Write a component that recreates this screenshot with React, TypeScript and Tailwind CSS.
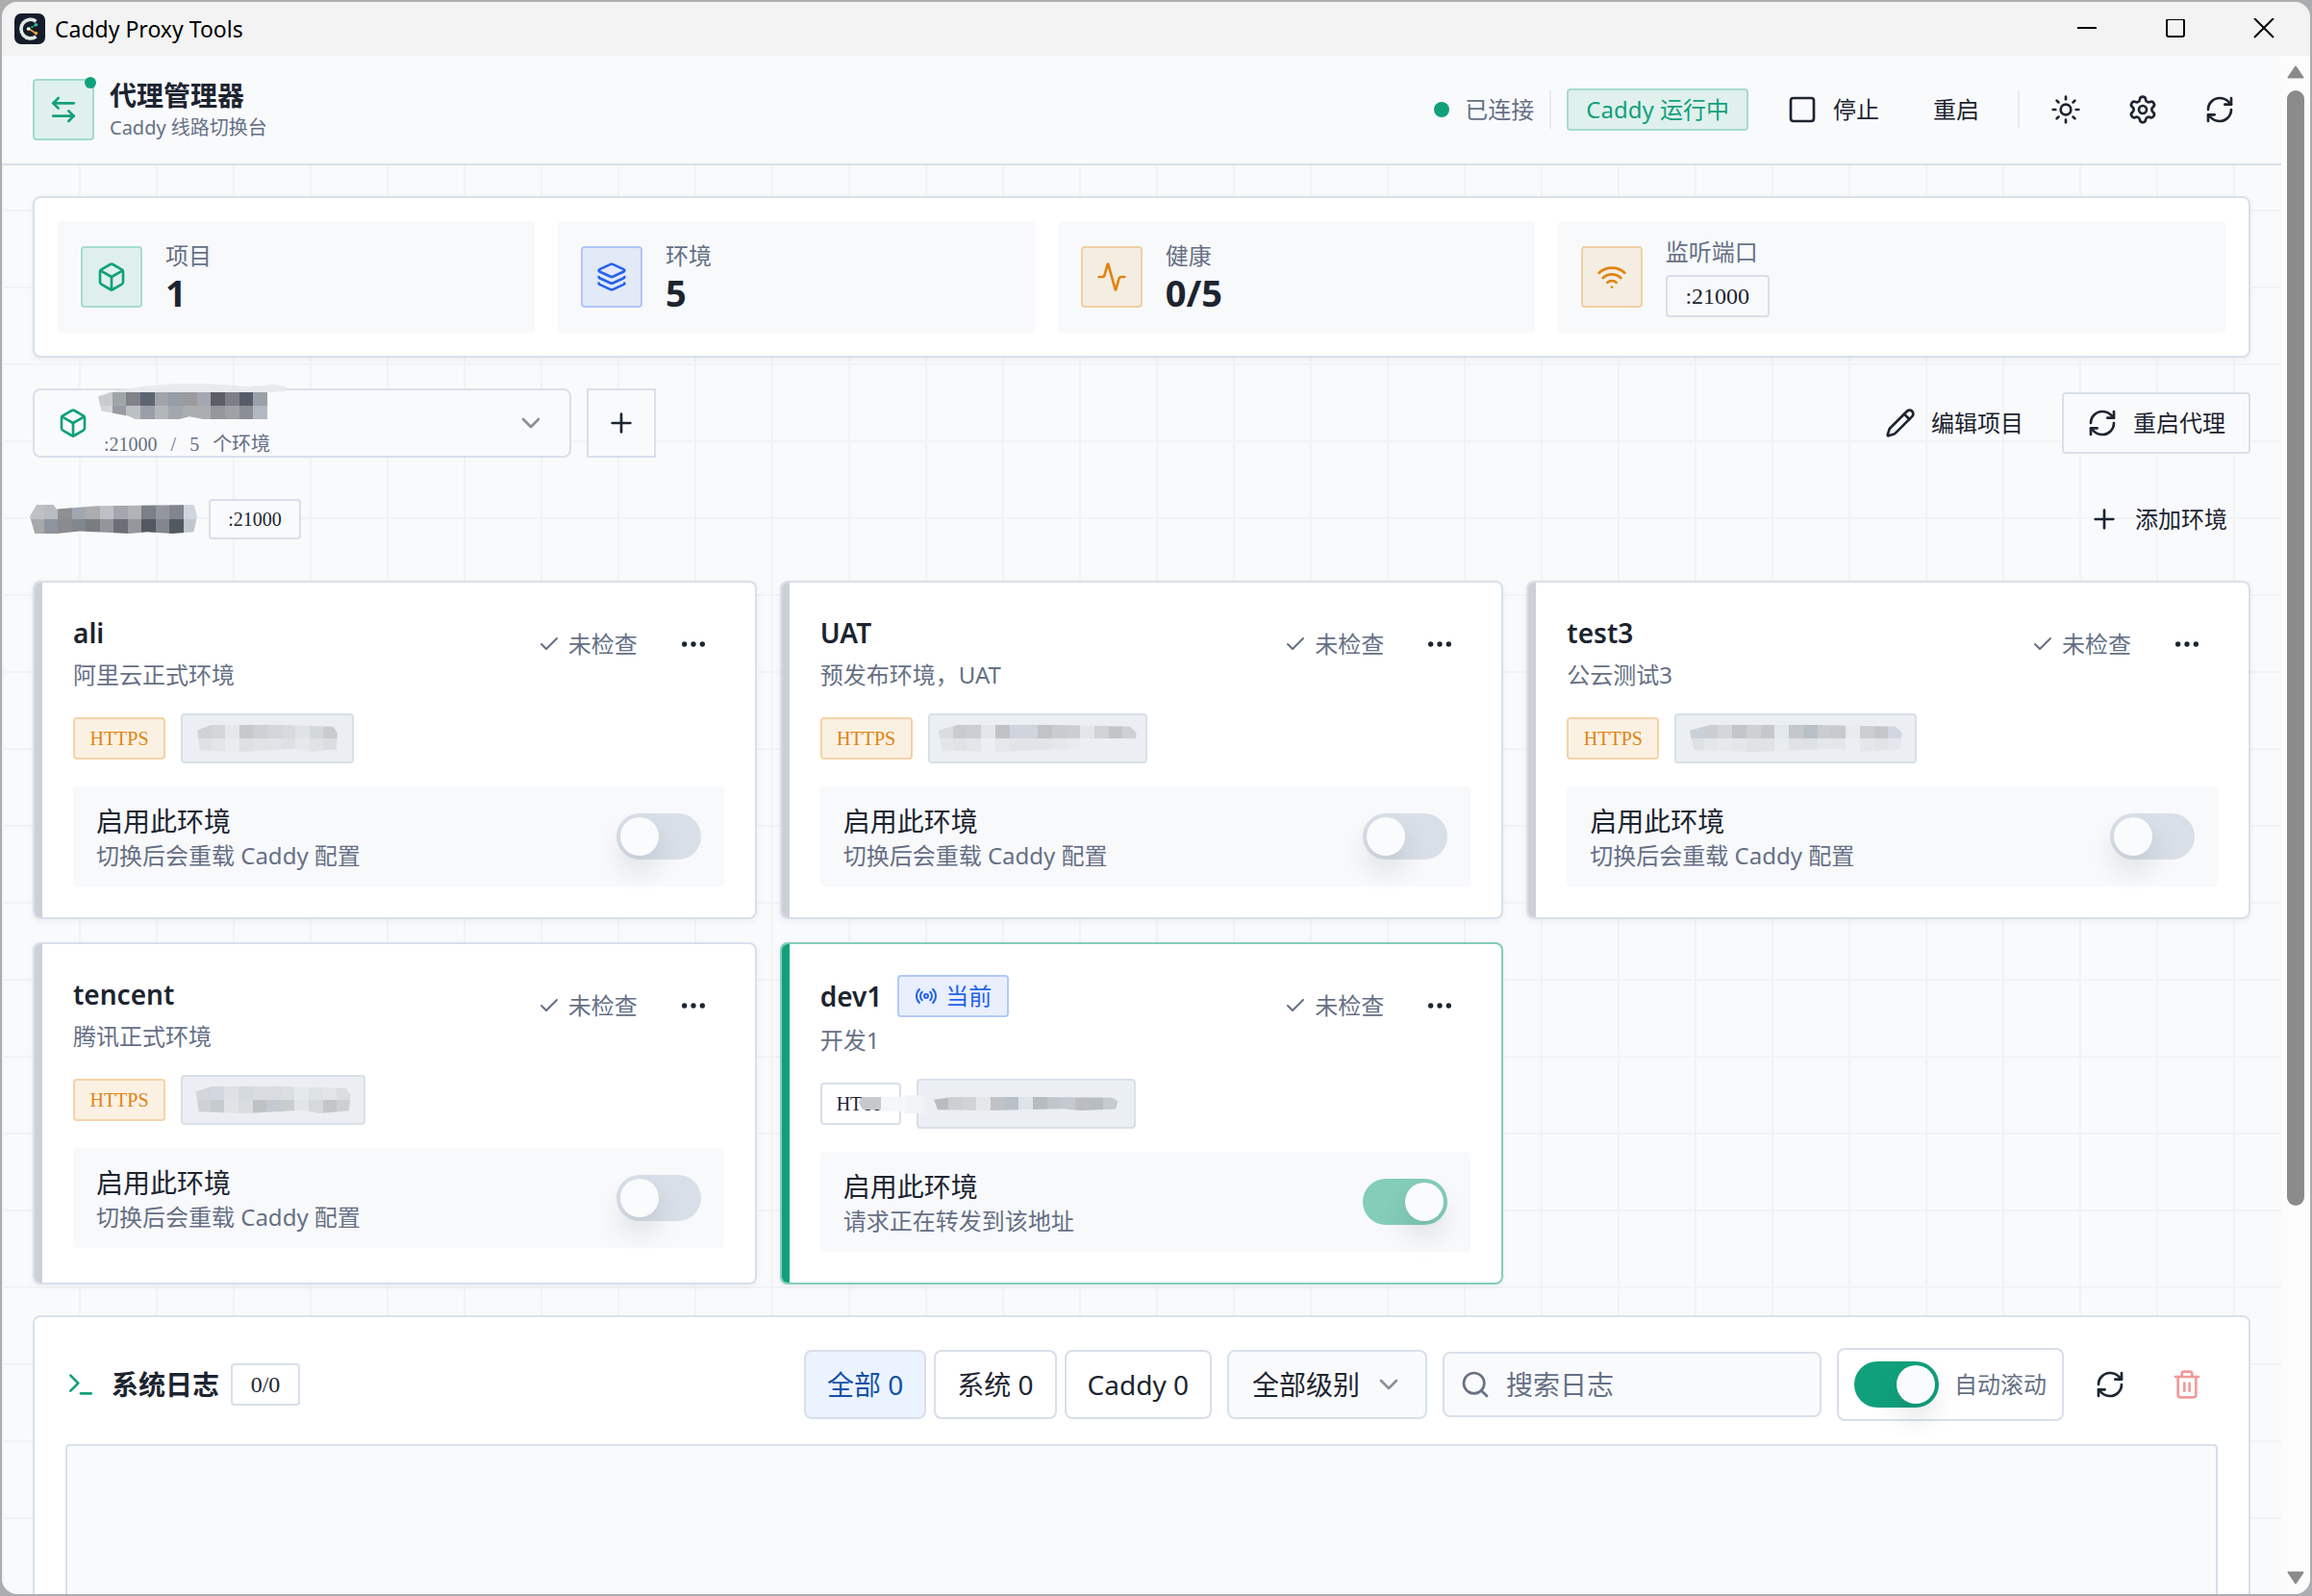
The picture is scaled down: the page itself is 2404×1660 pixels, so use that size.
import { useState } from "react";
import type { ReactNode } from "react";
import {
  Activity,
  ArrowLeftRight,
  Box,
  Check,
  ChevronDown,
  Ellipsis,
  Layers,
  Pencil,
  Plus,
  Radio,
  RefreshCw,
  Search,
  Settings,
  Square,
  Sun,
  Terminal,
  Trash2,
  Wifi,
} from "lucide-react";

type Env = {
  name: string;
  desc: string;
  proto: "HTTPS" | "HTTP";
  urlWidth: number;
  cells: string[][];
  active?: boolean;
};

const ENVS: Env[] = [
  {
    name: "ali",
    desc: "阿里云正式环境",
    proto: "HTTPS",
    urlWidth: 180,
    cells: [
      ["#cfd3d6", "#d3d7da", "#e4e8ea", "#c6c9cc", "#cdd1d4", "#d2d5d9", "#d6dade", "#dfe3e6", "#d3d8da", "#c8cccf"],
      ["#dde1e3", "#e2e6e8", "#e8ecef", "#dde0e3", "#dfe3e5", "#e1e4e7", "#dde1e4", "#e5e9eb", "#dfe3e6", "#dadee1"],
    ],
  },
  {
    name: "UAT",
    desc: "预发布环境，UAT",
    proto: "HTTPS",
    urlWidth: 228,
    cells: [
      ["#d9dde0", "#c9cccf", "#cbced3", "#e3e7ea", "#c0c3c6", "#d0d4de", "#d0d4dc", "#c0c4c7", "#c9cccf", "#cacdd2", "#e3e7ea", "#cfd3d6", "#c2c5c8", "#cdd1d6"],
      ["#e2e6e9", "#dfe3e6", "#e2e6e9", "#ebeff3", "#e4e8eb", "#e0e4e8", "#e0e4e8", "#e1e5e8", "#e4e8eb", "#e7ebee", "#ebeff3", "#ebeff3", "#ebeff3", "#ebeff3"],
    ],
  },
  {
    name: "test3",
    desc: "公云测试3",
    proto: "HTTPS",
    urlWidth: 252,
    cells: [
      ["#c9d0d8", "#cacdd2", "#d3d7da", "#c2c5c9", "#cdd1d4", "#c4c8cc", "#e3e8ec", "#c4c8cc", "#b9c0c8", "#c9cdd1", "#c6cacd", "#e8ebee", "#cbcfd2", "#c3c7ca", "#d2d6e0"],
      ["#dde1e4", "#e3e7ea", "#e6eaed", "#e3e7ea", "#dfe3e6", "#dfe3e6", "#e8ecef", "#dfe3e6", "#dde1e5", "#e3e7ea", "#e3e7ea", "#ebeff3", "#e3e7ea", "#e0e4e7", "#e3e6ec"],
    ],
  },
  {
    name: "tencent",
    desc: "腾讯正式环境",
    proto: "HTTPS",
    urlWidth: 192,
    cells: [
      ["#d3d5da", "#d3d7df", "#dde1e5", "#d5d9e0", "#d9dde0", "#d8dce0", "#dbdfe2", "#e4e9ec", "#dde2e4", "#e1e5e7", "#dadee1"],
      ["#cfd1d4", "#c6cbcf", "#dfe3e5", "#d9dde0", "#bfc2c5", "#c5c9d2", "#cacdd0", "#e1e5e8", "#d5d9db", "#c2c6c9", "#ccd0d3"],
    ],
  },
  {
    name: "dev1",
    desc: "开发1",
    proto: "HTTP",
    urlWidth: 228,
    active: true,
    cells: [
      ["#b9bcbf", "#cdd0d3", "#d0d4d6", "#e3e7ea", "#c0c2c5", "#b9c1c8", "#dfe4e8", "#b9bcbf", "#bfc6cc", "#c3c9ce", "#babec1", "#b8bdc4", "#c6cbd0"],
    ],
  },
];

const PROJECT_MASK = [
  ["#c9cbcd", "#a0a5a8", "#808287", "#5e6572", "#a1a5a9", "#959da6", "#9b9b9e", "#a3a7b0", "#5b5e66", "#7c7f87", "#565c69", "#9aa1a8"],
  ["#d5d6d7", "#989ba3", "#bcc0c4", "#9a9ea8", "#b3b7b9", "#a2a6ae", "#abaeaf", "#abaeb0", "#94969c", "#9fa1a6", "#8b8e95", "#b2b8c1"],
];

const TITLE_MASK = [
  ["#bec1c4", "#b8bbc0", "#8f8f92", "#a0a7b1", "#adadb0", "#bdc0c6", "#a3a6ac", "#b1b4b6", "#7b7f87", "#9597a0", "#81858d", "#cfd5de"],
  ["#a6a8aa", "#8e949f", "#8a8a8f", "#81878f", "#7a7d80", "#92959c", "#6d6f76", "#95979c", "#535963", "#83868f", "#535961", "#c0c7cf"],
];

// Pixelated strip that hides a private value.
function Mask({ rows, width, rowHeight, className }: { rows: string[][]; width: number; rowHeight: number; className?: string }) {
  return (
    <svg
      width={width}
      height={rows.length * rowHeight}
      viewBox={`0 0 ${rows[0].length} ${rows.length}`}
      preserveAspectRatio="none"
      shapeRendering="crispEdges"
      className={className}
      aria-hidden="true"
    >
      {rows.map((row, y) => row.map((fill, x) => <rect key={`${x}-${y}`} x={x} y={y} width="1" height="1" fill={fill} />))}
    </svg>
  );
}

function Chip({ children, className = "" }: { children: ReactNode; className?: string }) {
  return (
    <span className={`inline-flex items-center justify-center rounded border-2 font-['Liberation_Serif','Noto_Sans_CJK_SC',serif] ${className}`}>
      {children}
    </span>
  );
}

function Toggle({ checked, onChange, label, tone }: { checked: boolean; onChange: () => void; label: string; tone: string }) {
  return (
    <input
      type="checkbox"
      role="switch"
      aria-label={label}
      checked={checked}
      onChange={onChange}
      className={`h-12 w-[88px] shrink-0 appearance-none rounded-full bg-[#d8dfe8] p-1 before:block before:size-10 before:rounded-full before:bg-[#fafbfc] before:shadow-[0_16px_28px_rgba(28,36,48,0.12)] before:content-[''] checked:before:translate-x-10 ${tone}`}
    />
  );
}

function IconButton({ label, children, className = "" }: { label: string; children: ReactNode; className?: string }) {
  return (
    <button type="button" aria-label={label} className={`flex size-16 shrink-0 items-center justify-center rounded ${className}`}>
      {children}
    </button>
  );
}

function Stat({ icon, tone, label, children }: { icon: ReactNode; tone: string; label: string; children: ReactNode }) {
  return (
    <div className="flex items-center gap-6 rounded bg-[#f8f9fb] px-6 py-4">
      <div className={`flex size-16 shrink-0 items-center justify-center rounded border-2 ${tone}`}>{icon}</div>
      <div className="flex flex-col items-start">
        <span className="text-2xl leading-8 text-[#667085]">{label}</span>
        {children}
      </div>
    </div>
  );
}

function AppIcon() {
  return (
    <svg width="32" height="32" viewBox="0 0 32 32" aria-hidden="true">
      <rect width="32" height="32" rx="7" fill="#141d29" />
      <path d="M22.500 8.200A9.800 9.800 0 1 0 22.500 24" fill="none" stroke="#dfe9e6" strokeWidth="3.600" />
      <path d="M15 16l7-4" stroke="#2cc7a5" strokeWidth="1.500" strokeDasharray="2 1" />
      <path d="M15 16l7 4.500" stroke="#f0a63a" strokeWidth="1.500" />
      <circle cx="14.500" cy="16" r="1.800" fill="#fff" />
      <circle cx="22.500" cy="11.800" r="1.700" fill="#2cc7a5" />
      <circle cx="22.500" cy="20.500" r="1.700" fill="#f0a63a" />
    </svg>
  );
}

function TitleBar() {
  return (
    <div className="flex h-14 shrink-0 items-center bg-[#f3f3f3] pr-0.5 pl-[13px]">
      <AppIcon />
      <span className="ml-2.5 text-[23px] leading-8 text-black">Caddy Proxy Tools</span>
      <div className="ml-auto flex">
        <button type="button" aria-label="最小化" className="flex h-14 w-[92px] items-center justify-center">
          <svg width="20" height="20" viewBox="0 0 20 20"><path d="M0 9h20" stroke="#000" strokeWidth="2" /></svg>
        </button>
        <button type="button" aria-label="最大化" className="flex h-14 w-[92px] items-center justify-center">
          <svg width="20" height="20" viewBox="0 0 20 20"><rect x="1" y="0" width="18" height="18" rx="2" fill="none" stroke="#000" strokeWidth="2" /></svg>
        </button>
        <button type="button" aria-label="关闭" className="flex h-14 w-[92px] items-center justify-center">
          <svg width="22" height="22" viewBox="0 0 22 22"><path d="M1 0l20 20M21 0L1 20" stroke="#000" strokeWidth="2" /></svg>
        </button>
      </div>
    </div>
  );
}

function Header() {
  return (
    <header className="flex h-[114px] shrink-0 items-center gap-4 border-b-2 border-[#d8e0e8] bg-[#f9fafc] px-8">
      <div className="relative flex size-16 items-center justify-center rounded border-2 border-[#9fdccb] bg-[#e0f1ed] text-[#11a07c]">
        <ArrowLeftRight size={32} />
        <span className="absolute -top-1 -right-1 size-3 rounded-full bg-[#11a07c]" />
      </div>
      <div>
        <h1 className="text-[28px] leading-9 font-bold">代理管理器</h1>
        <p className="mt-0.5 text-xl leading-7 text-[#667085]">Caddy 线路切换台</p>
      </div>
      <div className="ml-auto flex items-center gap-4 text-2xl leading-8">
        <span className="size-4 rounded-full bg-[#11a07c]" />
        <span className="text-[#667085]">已连接</span>
        <span className="h-10 w-0.5 bg-[#e8ebef]" />
        <span className="flex h-11 items-center rounded border-2 border-[#a6dccd] bg-[#e0f1ed] px-[18px] text-[#11a07c]">Caddy 运行中</span>
        <button type="button" className="flex h-16 items-center gap-4 px-6">
          <Square size={32} />
          停止
        </button>
        <button type="button" className="-ml-2 flex h-16 items-center px-6">重启</button>
        <span className="h-10 w-0.5 bg-[#e8ebef]" />
        <IconButton label="主题"><Sun size={32} /></IconButton>
        <IconButton label="设置"><Settings size={32} /></IconButton>
        <IconButton label="刷新"><RefreshCw size={32} /></IconButton>
      </div>
    </header>
  );
}

function Stats() {
  return (
    <section className="grid grid-cols-[1fr_1fr_1fr_1.4fr] gap-6 rounded-lg border-2 border-[#d8e0e9] bg-white p-6 shadow-[0_2px_6px_rgba(28,36,48,0.06)]">
      <Stat icon={<Box size={32} />} tone="border-[#a7dccf] bg-[#dff0ec] text-[#11a07c]" label="项目">
        <strong className="text-[38px] leading-11">1</strong>
      </Stat>
      <Stat icon={<Layers size={32} />} tone="border-[#b0c6f8] bg-[#e2e9f7] text-[#2563eb]" label="环境">
        <strong className="text-[38px] leading-11">5</strong>
      </Stat>
      <Stat icon={<Activity size={32} />} tone="border-[#f0d0a4] bg-[#f4ede1] text-[#e08412]" label="健康">
        <strong className="text-[38px] leading-11">0/5</strong>
      </Stat>
      <Stat icon={<Wifi size={32} />} tone="border-[#f0d0a4] bg-[#f4ede1] text-[#e08412]" label="监听端口">
        <Chip className="mt-2 h-11 w-[108px] border-[#d8dfe9] text-2xl">:21000</Chip>
      </Stat>
    </section>
  );
}

function ProjectBar() {
  return (
    <div className="flex items-center gap-4">
      <label className="relative flex h-[72px] w-[560px] items-center rounded-lg border-2 border-[#d8e0e9] bg-[#f9fafc] px-6">
        <Box size={32} className="text-[#11a07c]" />
        <svg width="192" height="16" viewBox="0 0 192 16" className="absolute -top-2 left-[70px]" aria-hidden="true">
          <path d="M6 10 42 4 75 1 110 1 150 4 180 2 192 4 190 9 150 11V16H6z" fill="#e8ebed" />
        </svg>
        <span className="relative ml-4 flex flex-col self-start pt-0.5">
          <Mask
            rows={PROJECT_MASK}
            width={176}
            rowHeight={14}
            className="-ml-1.5 [clip-path:polygon(0_15%,8%_0,100%_0,100%_100%,62%_100%,54%_90%,48%_100%,22%_100%,18%_88%,2%_70%)]"
          />
          <span className="mt-3.5 flex gap-3.5 font-['Liberation_Serif','Noto_Sans_CJK_SC',serif] text-xl leading-6 text-[#667085]">
            <span>:21000</span>
            <span>/</span>
            <span>5</span>
            <span>个环境</span>
          </span>
        </span>
        <ChevronDown size={32} className="ml-auto text-[#8a8f98]" />
        <select aria-label="项目" className="absolute inset-0 opacity-0">
          <option>:21000</option>
        </select>
      </label>
      <button type="button" aria-label="新建项目" className="flex size-[72px] items-center justify-center border-2 border-[#d8e0e9] bg-[#f9fafc]">
        <Plus size={32} />
      </button>
      <div className="ml-auto flex items-center gap-4 text-2xl leading-8">
        <button type="button" className="flex h-16 items-center gap-4 px-6">
          <Pencil size={32} />
          编辑项目
        </button>
        <button type="button" className="flex h-16 items-center gap-4 rounded border-2 border-[#d8e0e9] bg-[#f9fafc] px-6">
          <RefreshCw size={32} />
          重启代理
        </button>
      </div>
    </div>
  );
}

function EnvCard({ env, enabled, onToggle }: { env: Env; enabled: boolean; onToggle: () => void }) {
  return (
    <article className={`flex overflow-hidden rounded-lg border-2 bg-white shadow-[0_2px_6px_rgba(28,36,48,0.06)] ${env.active ? "border-[#84cdb9]" : "border-[#d8e0e9]"}`}>
      <div className={`w-2 shrink-0 ${env.active ? "bg-[#11a07c]" : "bg-[#cdd0d9]"}`} />
      <div className="flex min-w-0 grow flex-col gap-6 p-8">
        <div className="flex items-start">
          <div className="flex flex-col gap-2">
            <div className="flex min-h-10 items-center gap-4">
              <h3 className="text-[28px] leading-10 font-semibold">{env.name}</h3>
              {env.active && (
                <span className="flex h-11 items-center gap-2 rounded border-2 border-[#b3caf9] bg-[#e9effd] px-4 text-2xl text-[#2563eb]">
                  <Radio size={24} />
                  当前
                </span>
              )}
            </div>
            <p className="text-2xl leading-8 text-[#667085]">{env.desc}</p>
          </div>
          <div className="ml-auto flex items-center gap-[26px]">
            <span className="flex items-center gap-2 text-2xl leading-8 text-[#667085]">
              <Check size={24} />
              未检查
            </span>
            <IconButton label={`${env.name} 更多操作`}><Ellipsis size={32} /></IconButton>
          </div>
        </div>
        <div className="flex h-[52px] items-center gap-4">
          {env.proto === "HTTPS" ? (
            <Chip className="h-11 w-24 border-[#f4d3a8] bg-[#fbf1e3] text-xl text-[#e08412]">HTTPS</Chip>
          ) : (
            <span className="relative flex">
              <Chip className="h-11 w-[84px] border-[#d8dfe9] bg-white text-xl">HTTP</Chip>
              <svg width="68" height="28" viewBox="0 0 68 28" className="absolute top-2 left-10" aria-hidden="true">
                <path d="M5 7h43v15H22V19H3L0 13z" fill="#f4f6f8" />
                <path d="M3 7h20v13H4L0 13z" fill="#c6c8cb" />
                <path d="M48 5h20v19H48z" fill="#f1f3f5" />
              </svg>
            </span>
          )}
          <div className="flex h-[52px] items-center justify-center rounded border-2 border-[#d8e0e9] bg-[#ebeff3]" style={{ width: env.urlWidth }}>
            <Mask
              rows={env.cells}
              width={env.cells[0].length * 15 - 4}
              rowHeight={14}
              className="[clip-path:polygon(0_20%,10%_0,60%_0,97%_6%,100%_30%,99%_90%,80%_100%,70%_88%,30%_100%,2%_94%)]"
            />
          </div>
        </div>
        <div className="flex items-center rounded bg-[#f8f9fb] px-6 py-4">
          <div>
            <div className="text-[28px] leading-10">启用此环境</div>
            <div className="text-2xl leading-8 text-[#667085]">{env.active ? "请求正在转发到该地址" : "切换后会重载 Caddy 配置"}</div>
          </div>
          <div className="ml-auto flex">
            <Toggle checked={enabled} onChange={onToggle} label={`启用 ${env.name}`} tone="checked:bg-[#84cdb9]" />
          </div>
        </div>
      </div>
    </article>
  );
}

const SOURCES = ["全部 0", "系统 0", "Caddy 0"];

function LogPanel() {
  const [source, setSource] = useState(SOURCES[0]);
  const [autoScroll, setAutoScroll] = useState(true);

  return (
    <section className="rounded-lg border-2 border-[#d8e0e9] bg-white p-8">
      <div className="flex items-center">
        <Terminal size={32} className="text-[#11a07c]" />
        <h2 className="ml-4 text-[28px] leading-10 font-bold">系统日志</h2>
        <Chip className="ml-3 h-11 w-[72px] border-[#d8dfe9] text-2xl">0/0</Chip>
        <div className="ml-auto flex items-center gap-4 text-[28px] leading-10">
          <div className="flex gap-2">
            {SOURCES.map((item) => (
              <button
                key={item}
                type="button"
                onClick={() => setSource(item)}
                className={`h-[72px] rounded-lg border-2 border-[#d8dfe9] px-[22px] ${item === source ? "bg-[#ebf4fe] text-[#1550a8]" : "bg-white"}`}
              >
                {item}
              </button>
            ))}
          </div>
          <div className="relative flex items-center">
            <select aria-label="日志级别" className="h-[72px] w-[208px] appearance-none rounded-lg border-2 border-[#d8dfe9] bg-[#f9fafc] pl-6">
              <option>全部级别</option>
            </select>
            <ChevronDown size={32} className="pointer-events-none absolute right-6 text-[#8a8f98]" />
          </div>
          <label className="flex h-[68px] w-[394px] items-center gap-4 rounded-lg border-2 border-[#d8dfe9] bg-[#f9fafc] px-4 text-[#667085]">
            <Search size={32} className="shrink-0" />
            <input type="search" aria-label="搜索日志" placeholder="搜索日志" className="min-w-0 grow bg-transparent outline-none placeholder:text-[#667085]" />
          </label>
          <label className="flex h-[76px] items-center gap-4 rounded-lg border-2 border-[#d8dfe9] px-4 text-2xl text-[#667085]">
            <Toggle checked={autoScroll} onChange={() => setAutoScroll(!autoScroll)} label="自动滚动" tone="checked:bg-[#11a07c]" />
            自动滚动
          </label>
          <IconButton label="刷新日志"><RefreshCw size={32} /></IconButton>
          <IconButton label="清空日志" className="text-[#f29a9a]"><Trash2 size={32} /></IconButton>
        </div>
      </div>
      <div className="mt-6 h-96 rounded border-2 border-[#d8e0e9] bg-[#f9fafc]" />
    </section>
  );
}

function ScrollRail() {
  return (
    <div className="flex w-[30px] shrink-0 flex-col items-center bg-[#fcfcfc] py-2.5" aria-hidden="true">
      <svg width="18" height="14" viewBox="0 0 18 14"><path d="M9 1.500 16.500 12.500h-15z" fill="#8b8b8b" stroke="#8b8b8b" strokeWidth="2" strokeLinejoin="round" /></svg>
      <div className="mt-3 h-[73.4%] w-[18px] rounded-full bg-[#8b8b8b]" />
      <svg className="mt-auto" width="18" height="14" viewBox="0 0 18 14"><path d="M9 12.500 16.500 1.500h-15z" fill="#8b8b8b" stroke="#8b8b8b" strokeWidth="2" strokeLinejoin="round" /></svg>
    </div>
  );
}

export default function App() {
  const [activeEnv, setActiveEnv] = useState("dev1");

  return (
    <div className="h-screen overflow-hidden bg-[#acadaf] p-0.5 font-['Noto_Sans','Noto_Sans_CJK_SC',sans-serif] text-[#1c2430]">
      <div className="flex h-full flex-col overflow-hidden rounded-2xl bg-[#f9fafc]">
        <TitleBar />
        <div className="flex min-h-0 grow">
          <div className="flex min-w-0 grow flex-col overflow-hidden bg-[linear-gradient(#f1f3f5_2px,transparent_2px),linear-gradient(90deg,#f1f3f5_2px,transparent_2px)] bg-size-[80px_80px]">
            <Header />
            <main className="flex flex-col gap-8 p-8">
              <Stats />
              <ProjectBar />
              <div className="flex items-center">
                <h2 aria-label="当前项目" className="-ml-[3px]">
                  <Mask
                    rows={TITLE_MASK}
                    width={174}
                    rowHeight={15}
                    className="[clip-path:polygon(0_40%,4%_0,14%_0,16%_15%,40%_4%,98%_0,100%_40%,98%_94%,85%_100%,70%_94%,60%_100%,30%_92%,16%_100%,3%_100%)]"
                  />
                </h2>
                <Chip className="ml-3 h-[42px] w-24 border-[#d8dfe9] bg-[#f9fafc] text-xl">:21000</Chip>
                <button type="button" className="ml-auto flex h-16 items-center gap-4 px-6 text-2xl leading-8">
                  <Plus size={32} />
                  添加环境
                </button>
              </div>
              <div className="grid grid-cols-3 gap-6">
                {ENVS.map((env) => (
                  <EnvCard key={env.name} env={env} enabled={env.name === activeEnv} onToggle={() => setActiveEnv(env.name === activeEnv ? "" : env.name)} />
                ))}
              </div>
              <LogPanel />
            </main>
          </div>
          <ScrollRail />
        </div>
      </div>
    </div>
  );
}
